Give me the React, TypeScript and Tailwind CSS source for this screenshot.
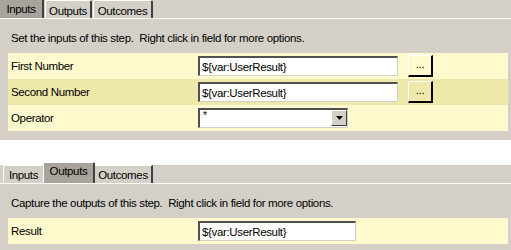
import React from 'react';

const font = { fontFamily: '"Liberation Sans", Arial, sans-serif' };

interface TabProps {
  label: string;
  width: string;
  selected?: boolean;
  first?: boolean;
}

const Tab: React.FC<TabProps> = ({ label, width, selected, first }) => {
  if (selected) {
    return (
      <div
        className={`${width} h-full flex items-start justify-center pt-[2px] bg-[#a8a49c] border-r-2 border-r-[#404040] ${first ? '' : 'border-l border-l-white rounded-t-[2px]'}`}
      >
        {label}
      </div>
    );
  }
  return (
    <div className={`${width} h-full flex items-start justify-center pt-[3px] ml-[1px] bg-[#d4d0c8] border-l border-t border-white border-r-2 border-r-[#404040] rounded-t-[2px]`}>
      {label}
    </div>
  );
};

const TextBox: React.FC<{ value: string; width: string }> = ({ value, width }) => (
  <div
    className={`${width} h-[20px] bg-white border-t-2 border-l-2 border-t-[#505050] border-l-[#505050] border-b border-r border-b-[#d4d0c8] border-r-[#d4d0c8] flex items-center pl-[2px]`}
  >
    {value}
  </div>
);

const DotsButton: React.FC = () => (
  <div className="w-[25px] h-[22px] ml-[10px] border-t border-l border-white border-b-2 border-r-2 border-b-black border-r-black flex items-end justify-center leading-none pb-[5px]">
    ...
  </div>
);

interface RowProps {
  label: string;
  alt?: boolean;
  children: React.ReactNode;
}

const Row: React.FC<RowProps> = ({ label, alt, children }) => (
  <div className={`h-[26px] flex items-center ${alt ? 'bg-[#eee8aa]' : 'bg-[#fffacd]'}`}>
    <div className="w-[190px] pl-[3px]">{label}</div>
    {children}
  </div>
);

export default function App() {
  return (
    <div
      className="w-[511px] h-[250px] bg-white text-black text-[11.5px] tracking-[-0.35px] leading-[14px] flex flex-col"
      style={font}
    >
      {/* Inputs panel */}
      <div className="h-[140px] bg-[#d4d0c8] flex flex-col">
        <div className="h-[18px] flex">
          <Tab label="Inputs" width="w-[44px]" selected first />
          <Tab label="Outputs" width="w-[47px]" />
          <Tab label="Outcomes" width="w-[60px]" />
        </div>
        <div className="flex-1 border-t border-white flex flex-col">
          <div className="h-[34px] pl-[11px] pt-[4px] flex items-center">
            Set the inputs of this step.&nbsp; Right click in field for more options.
          </div>
          <div className="ml-[8px] w-[500px] flex flex-col">
            <Row label="First Number">
              <TextBox value="${var:UserResult}" width="w-[200px]" />
              <DotsButton />
            </Row>
            <Row label="Second Number" alt>
              <TextBox value="${var:UserResult}" width="w-[200px]" />
              <DotsButton />
            </Row>
            <Row label="Operator">
              <div className="w-[150px] h-[20px] bg-white border-t-2 border-l-2 border-t-[#505050] border-l-[#505050] border-b border-r border-b-[#d4d0c8] border-r-[#d4d0c8] flex">
                <div className="flex-1 pl-[3px] text-[10px] leading-[12px]">*</div>
                <div className="w-[16px] h-[16px] bg-[#d4d0c8] border-t border-l border-white border-b border-r border-b-[#404040] border-r-[#404040] flex items-center justify-center">
                  <svg width="7" height="4" viewBox="0 0 7 4">
                    <path d="M0 0h7L3.5 4z" fill="black" />
                  </svg>
                </div>
              </div>
            </Row>
          </div>
        </div>
      </div>

      <div className="h-[22px] bg-white" />

      {/* Outputs panel */}
      <div className="flex-1 bg-[#d4d0c8] flex flex-col">
        <div className="h-[21px] flex bg-white">
          <div className="w-[3px] h-[18px] mt-[3px] bg-[#d4d0c8]" />
          <div className="w-[40px] h-[18px] mt-[3px] flex items-start justify-center pt-[2px] bg-[#d4d0c8] border-l border-t border-white">
            Inputs
          </div>
          <div className="w-[52px] h-full flex items-start justify-center pt-[1px] bg-[#a8a49c] border-l border-t border-white border-r-2 border-r-[#404040] rounded-t-[2px]">
            Outputs
          </div>
          <div className="w-[58px] h-[18px] mt-[3px] flex items-start justify-center pt-[2px] bg-[#d4d0c8] border-t border-white border-r-2 border-r-[#404040]">
            Outcomes
          </div>
          <div className="flex-1 h-[18px] mt-[3px] bg-[#d4d0c8]" />
        </div>
        <div className="flex-1 border-t border-white flex flex-col">
          <div className="h-[34px] pl-[11px] pt-[3px] flex items-center">
            Capture the outputs of this step.&nbsp; Right click in field for more options.
          </div>
          <div className="ml-[8px] w-[500px]">
            <Row label="Result">
              <TextBox value="${var:UserResult}" width="w-[158px]" />
            </Row>
          </div>
        </div>
      </div>
    </div>
  );
}
